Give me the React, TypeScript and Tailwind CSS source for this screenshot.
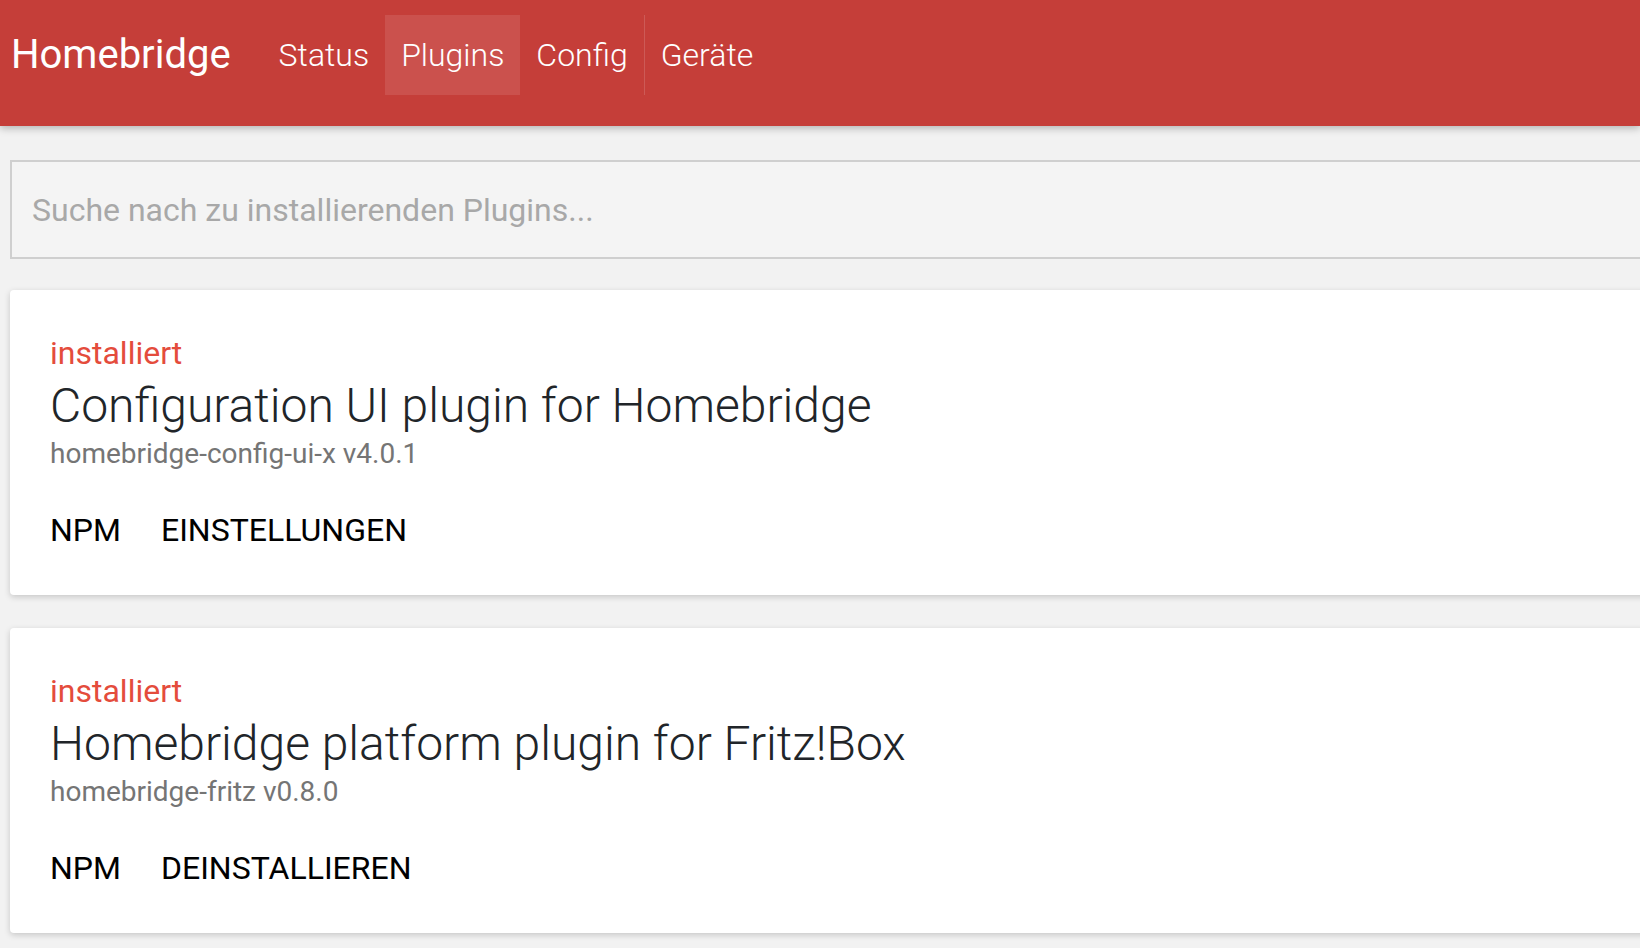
import React from "react";

const font = { fontFamily: "Roboto, 'Liberation Sans', Arial, sans-serif" };

function Card({ title, pkg, action }: { title: string; pkg: string; action: string }) {
  return (
    <div className="w-[1700px] rounded-[4px] bg-white pt-[45px] pb-[47px] pl-[40px] shadow-[0_2px_6px_rgba(0,0,0,0.18)]">
      <div className="text-[32px] leading-[36px] text-[#e44c3c]">installiert</div>
      <div className="mt-[6px] text-[48px] font-light leading-[58px] text-[#212529]">{title}</div>
      <div className="text-[28px] leading-[38px] text-[#757575]">{pkg}</div>
      <div className="mt-[39px] flex gap-[40px] text-[32px] leading-[36px] text-black">
        <span>NPM</span>
        <span>{action}</span>
      </div>
    </div>
  );
}

export default function App() {
  return (
    <div className="h-[948px] w-full overflow-hidden bg-[#f2f2f2]" style={font}>
      <header className="relative z-10 h-[126px] w-full bg-[#c53e39] shadow-[0_2px_8px_rgba(0,0,0,0.28)]">
        <nav className="flex h-[80px] translate-y-[15px] items-center text-white">
          <div className="pl-[11px] mr-[32px] text-[40px] leading-[80px]">Homebridge</div>
          <div className="px-[16px] text-[32px] font-light leading-[80px]">Status</div>
          <div className="bg-white/10 px-[16px] text-[32px] font-light leading-[80px]">Plugins</div>
          <div className="border-r border-white/15 px-[16px] text-[32px] font-light leading-[80px]">Config</div>
          <div className="px-[16px] text-[32px] font-light leading-[80px]">Geräte</div>
        </nav>
      </header>
      <main className="flex flex-col pl-[10px]">
        <div className="mt-[34px] h-[99px] w-[1700px] border-2 border-[#cfcfcf] bg-[#f4f4f4]">
          <input
            className="h-full w-full bg-transparent pl-[20px] text-[32px] text-[#333] outline-none placeholder:text-[#a8a8a8]"
            placeholder="Suche nach zu installierenden Plugins..."
          />
        </div>
        <div className="mt-[31px]">
          <Card title="Configuration UI plugin for Homebridge" pkg="homebridge-config-ui-x v4.0.1" action="EINSTELLUNGEN" />
        </div>
        <div className="mt-[33px]">
          <Card title="Homebridge platform plugin for Fritz!Box" pkg="homebridge-fritz v0.8.0" action="DEINSTALLIEREN" />
        </div>
      </main>
    </div>
  );
}
